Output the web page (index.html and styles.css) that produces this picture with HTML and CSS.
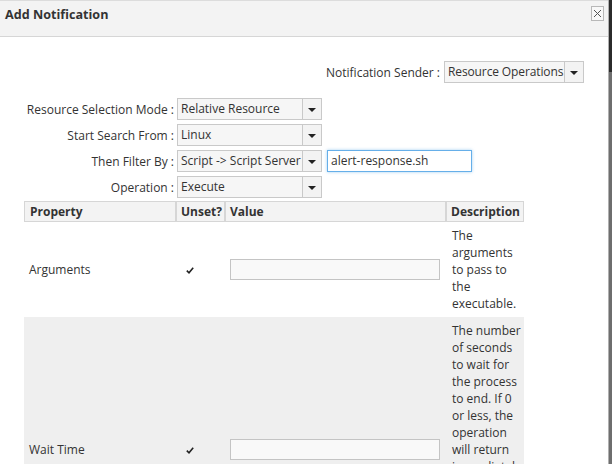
FILE: index.html
```html
<!DOCTYPE html>
<html>
<head>
<meta charset="utf-8">
<title>Add Notification</title>
<link rel="stylesheet" href="styles.css">
</head>
<body>
<div class="dialog">
  <div class="header">
    <div class="title">Add Notification</div>
    <div class="close">
      <svg width="9" height="9" viewBox="0 0 9 9"><path d="M1 1 L8 8 M8 1 L1 8" stroke="#555" stroke-width="1" fill="none"/></svg>
    </div>
  </div>
  <div class="content">
    <div class="sender-row">
      <span class="label">Notification Sender :</span>
      <div class="select sender">
        <span class="value">Resource Operations</span>
        <span class="arrow"><i></i></span>
      </div>
    </div>
    <div class="form">
      <span class="label">Resource Selection Mode :</span>
      <div class="select"><span class="value">Relative Resource</span><span class="arrow"><i></i></span></div>
      <span></span>
      <span class="label">Start Search From :</span>
      <div class="select"><span class="value">Linux</span><span class="arrow"><i></i></span></div>
      <span></span>
      <span class="label">Then Filter By :</span>
      <div class="select"><span class="value">Script -&gt; Script Server</span><span class="arrow"><i></i></span></div>
      <div class="text-input focused">alert-response.sh</div>
      <span class="label">Operation :</span>
      <div class="select"><span class="value">Execute</span><span class="arrow"><i></i></span></div>
      <span></span>
    </div>
    <table class="props">
      <colgroup>
        <col class="c-prop"><col class="c-unset"><col class="c-value"><col class="c-desc">
      </colgroup>
      <thead>
        <tr><th>Property</th><th class="unset-h">Unset?</th><th>Value</th><th>Description</th></tr>
      </thead>
      <tbody>
        <tr>
          <td class="name">Arguments</td>
          <td class="check"><svg width="8" height="7" viewBox="0 0 8 7"><path d="M0.8 3.6 L3 5.8 L7.2 0.8" stroke="#222" stroke-width="1.6" fill="none"/></svg></td>
          <td class="val"><div class="value-input"></div></td>
          <td class="desc">The arguments to pass to the executable.</td>
        </tr>
        <tr class="alt">
          <td class="name">Wait Time</td>
          <td class="check"><svg width="8" height="7" viewBox="0 0 8 7"><path d="M0.8 3.6 L3 5.8 L7.2 0.8" stroke="#222" stroke-width="1.6" fill="none"/></svg></td>
          <td class="val"><div class="value-input"></div></td>
          <td class="desc">The number of seconds to wait for the process to end. If 0 or less, the operation will return immediately without waiting for the process to end.</td>
        </tr>
      </tbody>
    </table>
  </div>
</div>
<div class="edge"></div>
</body>
</html>
```
FILE: styles.css
```css
html, body {
  margin: 0;
  padding: 0;
}
body {
  width: 612px;
  height: 464px;
  overflow: hidden;
  display: flex;
  font-family: "Open Sans", "Liberation Sans", sans-serif;
  font-size: 12px;
  color: #333;
  background: #fff;
}
.dialog {
  width: 608px;
  flex: none;
}
.edge {
  width: 4px;
  flex: none;
  border-left: 1px solid #b0b0b0;
  background: linear-gradient(#2b2b2b 0, #2b2b2b 72px, #6e6e6e 72px);
}
.header {
  height: 35px;
  background: #f3f3f3;
  border-top: 1px solid #dcdcdc;
  border-bottom: 1px solid #d6d6d6;
  display: flex;
  justify-content: space-between;
  align-items: flex-start;
}
.title {
  font-weight: bold;
  font-size: 12.6px;
  line-height: 18px;
  padding: 5px 0 0 5px;
  color: #333;
}
.close {
  width: 11px;
  height: 13px;
  margin: 5px 4px 0 0;
  border: 1px solid #b8b8b8;
  background: #f8f8f8;
  display: flex;
  align-items: center;
  justify-content: center;
}
.close svg { display: block; }
.content {
  padding-top: 24px;
}
.sender-row {
  display: flex;
  justify-content: flex-end;
  align-items: center;
  padding-right: 24px;
  height: 22px;
}
.sender-row .label {
  margin-right: 4px;
}
.select {
  width: 145px;
  height: 22px;
  box-sizing: border-box;
  display: flex;
  border: 1px solid #c9c9c9;
  background: #f6f6f6;
}
.select .value {
  flex: 1;
  min-width: 0;
  padding: 0 0 0 3px;
  line-height: 20px;
  white-space: nowrap;
  overflow: hidden;
}
.select.sender .value {
  letter-spacing: -0.12px;
  padding-left: 3px;
}
.select .arrow {
  width: 18px;
  flex: none;
  border-left: 1px solid #c9c9c9;
  background: #f3f3f3;
  display: flex;
  align-items: center;
  justify-content: center;
}
.select .arrow i {
  width: 0;
  height: 0;
  border-left: 4px solid transparent;
  border-right: 4px solid transparent;
  border-top: 4px solid #222;
  margin-top: 1px;
}
.select.sender { width: 140px; }
.form {
  margin-top: 15px;
  display: grid;
  grid-template-columns: 174px 148px 150px;
  grid-auto-rows: 22px;
  row-gap: 4px;
  align-items: center;
}
.form .label {
  text-align: right;
  white-space: nowrap;
}
.form .select {
  margin-left: 3px;
}
.text-input {
  margin-left: 5px;
  width: 145px;
  height: 22px;
  box-sizing: border-box;
  border: 1px solid #66afe9;
  box-shadow: 0 0 3px rgba(102, 175, 233, 0.6);
  padding: 0 3px;
  line-height: 20px;
  background: #fff;
}
.props {
  margin: 3px 0 0 24px;
  width: 500px;
  border-collapse: separate;
  border-spacing: 0;
  table-layout: fixed;
}
.c-prop { width: 152px; }
.c-unset { width: 49px; }
.c-value { width: 221px; }
.c-desc { width: 78px; }
.props th {
  height: 21px;
  box-sizing: border-box;
  background: #f3f3f3;
  border: 1px solid #d6d6d6;
  text-align: left;
  font-weight: bold;
  padding: 0 4px;
  line-height: 17px;
  white-space: nowrap;
}
.props th:first-child { padding-left: 5px; }
.props td {
  padding: 5px 5px;
  vertical-align: middle;
  line-height: 17px;
}
.props td.name { padding-left: 5px; }
.props td.check { text-align: left; padding: 0 0 0 10px; }
.props td.check svg { display: inline-block; vertical-align: middle; }
.props td.val { padding: 0 6px 0 5px; }
.props td.desc { padding: 5px 1px 5px 6px; }
.value-input {
  width: 210px;
  height: 21px;
  box-sizing: border-box;
  border: 1px solid #c4c4c4;
  background: #f9f9f9;
}
.props tr.alt td {
  background: #efefef;
  height: 254px;
}
.props tr.alt td.desc {
  vertical-align: top;
}
```
